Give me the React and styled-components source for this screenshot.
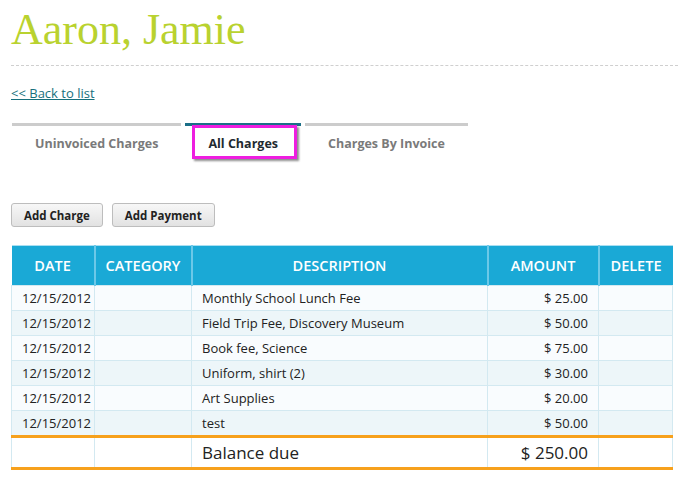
import React from "react";
import styled, { createGlobalStyle } from "styled-components";

const Global = createGlobalStyle`
  html, body { margin: 0; padding: 0; background: #fff; }
  body { font-family: "Open Sans", "Lato", sans-serif; color: #222; }
`;

const Page = styled.div`
  padding: 0 2px 0 11px;
  width: 667px;
`;

const Title = styled.h1`
  margin: 0;
  padding-top: 5px;
  height: 49px;
  font-family: "Liberation Serif", serif;
  font-weight: 400;
  font-size: 44px;
  line-height: 49px;
  color: #b9d22f;
`;

const Rule = styled.hr`
  margin: 11px 0 0 0;
  border: 0;
  border-top: 1px dashed #cfcfcf;
  height: 0;
`;

const BackLink = styled.a`
  display: inline-block;
  margin-top: 19px;
  font-size: 13px;
  line-height: 16px;
  color: #17707c;
  text-decoration: underline;
`;

const Tabs = styled.div`
  display: flex;
  gap: 4px;
  margin-top: 20px;
  padding-left: 1px;
`;

const Tab = styled.div`
  position: relative;
  padding: 8px 23px 0;
  height: 30px;
  border-top: 3px solid ${p => (p.$active ? "#1a6f87" : "#cccccc")};
  font-size: 12.5px;
  font-weight: 700;
  line-height: 20px;
  color: ${p => (p.$active ? "#1f2a30" : "#7a7a7a")};
  text-align: center;
`;

const Highlight = styled.span`
  position: absolute;
  left: 7px;
  right: 4px;
  top: -1px;
  height: 34px;
  box-sizing: border-box;
  border: 3px solid #ee1ee0;
  box-shadow: 2px 2px 2px rgba(0, 0, 0, 0.45);
  pointer-events: none;
`;

const Toolbar = styled.div`
  display: flex;
  gap: 9px;
  margin-top: 39px;
`;

const Button = styled.button`
  height: 24px;
  padding: 0 12px;
  border: 1px solid #bdbdbd;
  border-radius: 3px;
  background: linear-gradient(#f7f7f7, #e2e2e2);
  font-family: "Open Sans", sans-serif;
  font-size: 11.5px;
  font-weight: 700;
  color: #222;
`;

const Table = styled.table`
  margin-top: 18px;
  width: 661px;
  table-layout: fixed;
  border-collapse: collapse;
  font-size: 13px;
  color: #222;
`;

const Th = styled.th`
  height: 39px;
  padding: 0;
  background: #1aa9d6;
  color: #fff;
  font-weight: 600;
  font-size: 14.5px;
  text-transform: uppercase;
  text-align: center;
  border-left: 2px solid #6cc8e8;
  border-top: 1px solid #a9dff2;
  &:first-child { border-left: 0; }
`;

const Tr = styled.tr`
  background: ${p => (p.$alt ? "#edf6f9" : "#f9fcfe")};
`;

const Td = styled.td`
  height: 24px;
  padding: 0 10px;
  border: 1px solid #d3e9f1;
  text-align: ${p => (p.$right ? "right" : "left")};
  white-space: nowrap;
`;

const TotalRow = styled.tr`
  background: #fff;
  border-top: 3px solid #f7a11c;
  border-bottom: 3px solid #f7a11c;
`;

const TotalTd = styled.td`
  height: 29px;
  padding: 0 10px;
  border-left: 1px solid #d3e9f1;
  border-right: 1px solid #d3e9f1;
  font-size: 17px;
  text-align: ${p => (p.$right ? "right" : "left")};
`;

const rows = [
  ["12/15/2012", "Monthly School Lunch Fee", "$ 25.00"],
  ["12/15/2012", "Field Trip Fee, Discovery Museum", "$ 50.00"],
  ["12/15/2012", "Book fee, Science", "$ 75.00"],
  ["12/15/2012", "Uniform, shirt (2)", "$ 30.00"],
  ["12/15/2012", "Art Supplies", "$ 20.00"],
  ["12/15/2012", "test", "$ 50.00"],
];

export default function App() {
  return (
    <Page>
      <Global />
      <Title>Aaron, Jamie</Title>
      <Rule />
      <BackLink href="#">&lt;&lt; Back to list</BackLink>
      <Tabs>
        <Tab>Uninvoiced Charges</Tab>
        <Tab $active>
          All Charges
          <Highlight />
        </Tab>
        <Tab>Charges By Invoice</Tab>
      </Tabs>
      <Toolbar>
        <Button>Add Charge</Button>
        <Button>Add Payment</Button>
      </Toolbar>
      <Table>
        <colgroup>
          <col style={{ width: 83 }} />
          <col style={{ width: 97 }} />
          <col style={{ width: 296 }} />
          <col style={{ width: 111 }} />
          <col style={{ width: 74 }} />
        </colgroup>
        <thead>
          <tr>
            <Th>Date</Th>
            <Th>Category</Th>
            <Th>Description</Th>
            <Th>Amount</Th>
            <Th>Delete</Th>
          </tr>
        </thead>
        <tbody>
          {rows.map((r, i) => (
            <Tr key={i} $alt={i % 2 === 1}>
              <Td>{r[0]}</Td>
              <Td></Td>
              <Td>{r[1]}</Td>
              <Td $right>{r[2]}</Td>
              <Td></Td>
            </Tr>
          ))}
          <TotalRow>
            <TotalTd></TotalTd>
            <TotalTd></TotalTd>
            <TotalTd>Balance due</TotalTd>
            <TotalTd $right>$ 250.00</TotalTd>
            <TotalTd></TotalTd>
          </TotalRow>
        </tbody>
      </Table>
    </Page>
  );
}
